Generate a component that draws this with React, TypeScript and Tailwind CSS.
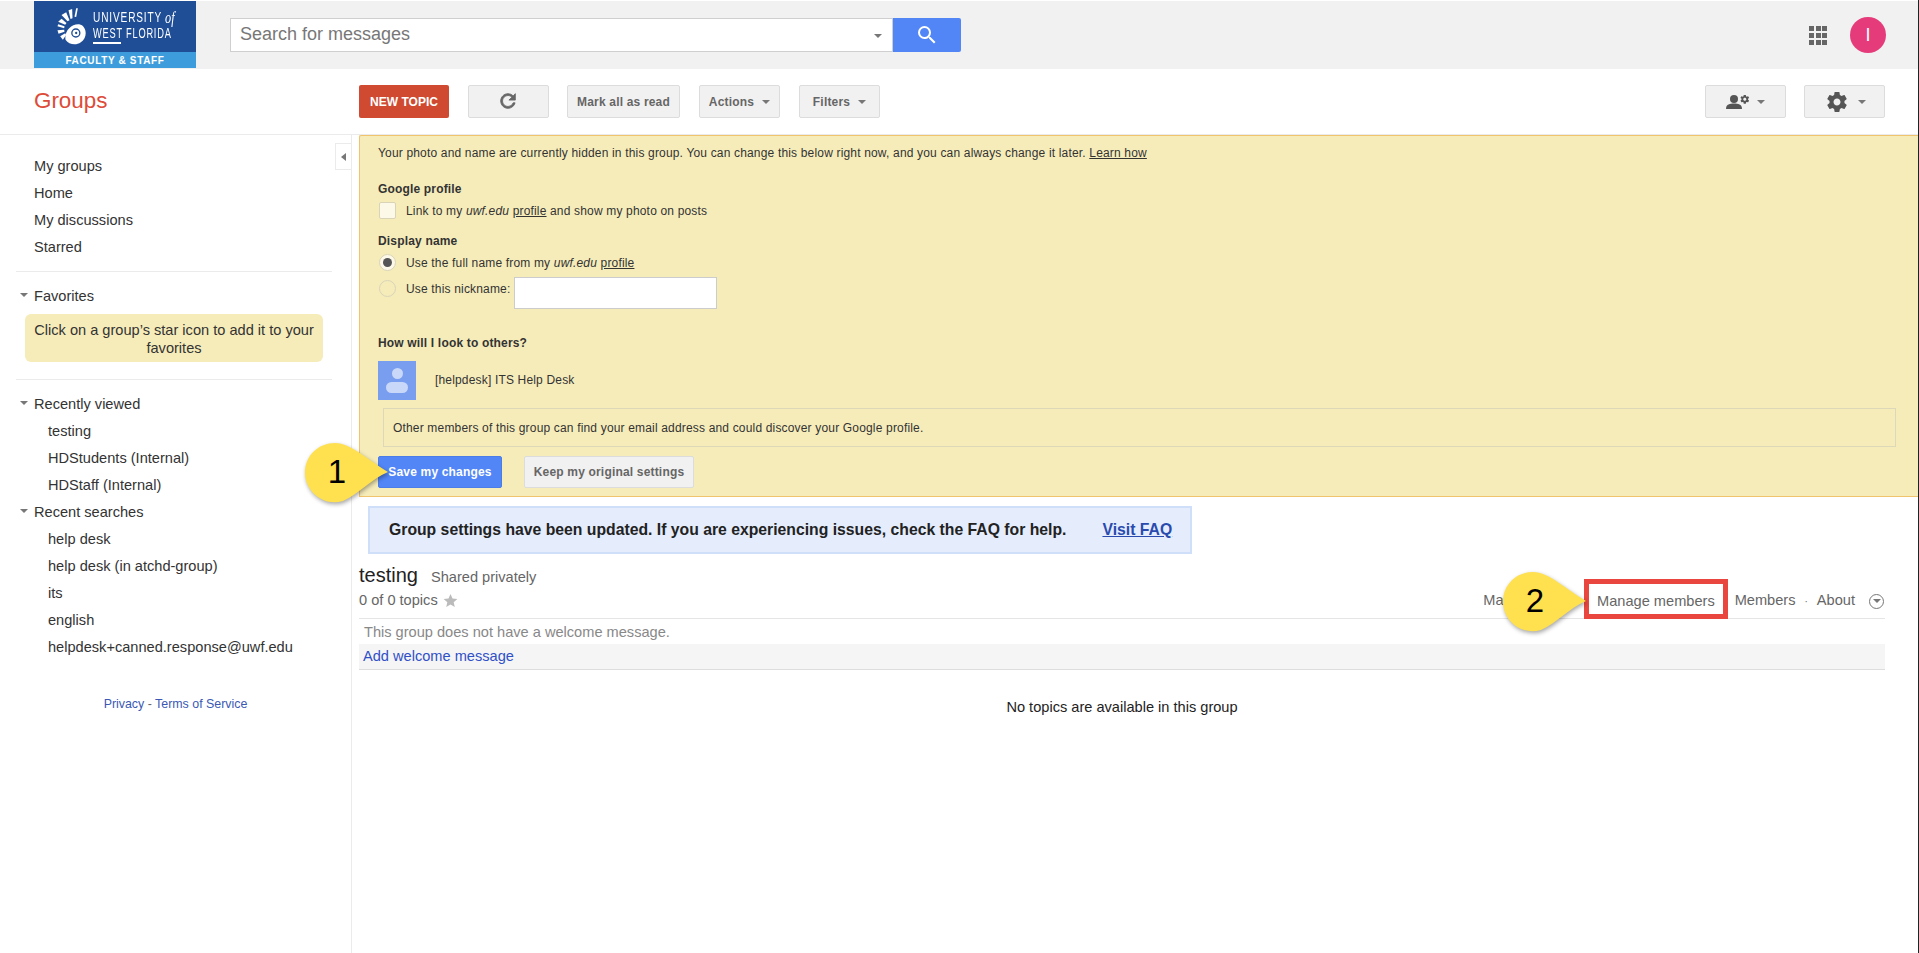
import React from 'react';

const GEAR =
  'M19.43 12.98c.04-.32.07-.64.07-.98s-.03-.66-.07-.98l2.11-1.65c.19-.15.24-.42.12-.64l-2-3.46c-.12-.22-.39-.3-.61-.22l-2.49 1c-.52-.4-1.08-.73-1.69-.98l-.38-2.65C14.46 2.18 14.25 2 14 2h-4c-.25 0-.46.18-.49.42l-.38 2.65c-.61.25-1.17.59-1.69.98l-2.49-1c-.23-.09-.49 0-.61.22l-2 3.46c-.13.22-.07.49.12.64l2.11 1.65c-.04.32-.07.65-.07.98s.03.66.07.98l-2.11 1.65c-.19.15-.24.42-.12.64l2 3.46c.12.22.39.3.61.22l2.49-1c.52.4 1.08.73 1.69.98l.38 2.65c.03.24.24.42.49.42h4c.25 0 .46-.18.49-.42l.38-2.65c.61-.25 1.17-.59 1.69-.98l2.49 1c.23.09.49 0 .61-.22l2-3.46c.12-.22.07-.49-.12-.64l-2.11-1.65zM12 15.5c-1.93 0-3.5-1.57-3.5-3.5s1.57-3.5 3.5-3.5 3.5 1.57 3.5 3.5-1.57 3.5-3.5 3.5z';

const Caret = () => (
  <span className="inline-block w-0 h-0 border-x-[4px] border-t-[4px] border-x-transparent border-t-[#777]" />
);

const Logo = () => (
  <div className="w-[162px] h-[67px] flex flex-col shrink-0 bg-[#1f4e96] font-['Liberation_Sans',sans-serif] text-white">
    <div className="flex-1 flex pl-[23px] pt-[6px]">
      <svg viewBox="80 20 90 120" width="31" height="40" className="shrink-0" fill="white">
        <polygon points="136,24 141,24 136,50 131,49" />
        <polygon points="113,30 124,26 125,54 119,56" />
        <polygon points="92,44 106,36 116,60 110,63" />
        <polygon points="82,64 92,55 107,68 103,73" />
        <polygon points="80,78 82,72 101,78 100,84" />
        <polygon points="83,100 80,90 100,88 101,94" />
        <polygon points="96,118 88,108 103,99 106,104" />
        <path d="M104 118 C100 92 122 70 145 72 C168 76 172 112 150 126 C134 137 114 132 104 118 Z" />
        <circle cx="135" cy="98" r="12" fill="none" stroke="#1f4e96" strokeWidth="4" />
        <circle cx="136" cy="98" r="3.5" fill="#1f4e96" />
      </svg>
      <div className="ml-[5px] pt-[2px] leading-none">
        <div className="h-[16px] flex items-center origin-left scale-x-[0.72] text-[14px] tracking-[1.2px] whitespace-nowrap">
          UNIVERSITY
          <span className="ml-[4px] font-['Liberation_Serif',serif] italic text-[17px] tracking-normal">of</span>
        </div>
        <div className="h-[16px] flex items-center origin-left scale-x-[0.66] text-[14px] tracking-[1.2px] whitespace-nowrap">
          WEST FLORIDA
        </div>
        <div className="mt-px w-[28px] h-[2px] bg-white" />
      </div>
    </div>
    <div className="h-[16px] bg-[#3d9cdb] flex items-center justify-center text-[10px] font-bold tracking-[0.65px]">
      FACULTY &amp; STAFF
    </div>
  </div>
);

const ToolButton = ({ className = '', children }: { className?: string; children: React.ReactNode }) => (
  <button className={`h-[33px] flex items-center justify-center rounded-[2px] border border-[#dcdcdc] bg-[#f1f1f1] text-[12px] font-bold text-[#666] tracking-[0.18px] ${className}`}>
    {children}
  </button>
);

const Row = ({ children, indent }: { children: React.ReactNode; indent?: boolean }) => (
  <div className={`h-[27px] flex items-center whitespace-nowrap ${indent ? 'pl-[48px]' : 'pl-[34px]'}`}>{children}</div>
);

const SectionRow = ({ children }: { children: React.ReactNode }) => (
  <div className="h-[27px] flex items-center whitespace-nowrap pl-[20px]">
    <span className="w-[14px] flex -mt-[3px]">
      <Caret />
    </span>
    {children}
  </div>
);

const Callout = ({ num, className }: { num: string; className: string }) => (
  <div className={`absolute w-[84px] h-[60px] ${className}`}>
    <svg viewBox="0 0 84 60" width="84" height="60" className="overflow-visible drop-shadow-[1px_2px_2px_rgba(0,0,0,0.35)]">
      <path d="M83 29 C66 36 54 51 38 58 C18 64 0 48 0 30 C0 12 14 0 30 0 C46 0 64 18 83 29 Z" fill="#ffe04f" />
    </svg>
    <span className="absolute left-[22px] top-[10px] w-[20px] text-center text-[33px] leading-[38px] text-black">{num}</span>
  </div>
);

export default function App() {
  return (
    <div className="relative w-full h-[953px] overflow-hidden flex flex-col bg-white pt-px border-r border-[#222] font-['Liberation_Sans',Arial,sans-serif] text-[14.6px] text-[#333]">
      {/* top bar */}
      <header className="h-[68px] shrink-0 bg-[#f1f1f1] flex pl-[34px] pr-[32px]">
        <Logo />
        <div className="ml-[34px] mt-[17px] h-[34px] flex">
          <div className="w-[663px] h-[34px] bg-white border border-[#cfcfcf] flex items-center pl-[9px] pr-[10px] pb-[2px] text-[18px] text-[#777]">
            <span className="flex-1">Search for messages</span>
            <span className="flex pt-[3px]">
              <Caret />
            </span>
          </div>
          <div className="w-[68px] h-[34px] bg-[#5286f7] rounded-r-[2px] flex items-center justify-center">
            <svg viewBox="0 0 24 24" width="24" height="24" fill="white">
              <path d="M15.5 14h-.79l-.28-.27A6.471 6.471 0 0 0 16 9.5 6.5 6.5 0 1 0 9.5 16c1.61 0 3.09-.59 4.23-1.57l.27.28v.79l5 4.99L20.49 19l-4.99-5zm-6 0C7.01 14 5 11.99 5 9.5S7.01 5 9.5 5 14 7.01 14 9.5 11.99 14 9.5 14z" />
            </svg>
          </div>
        </div>
        <div className="ml-auto flex items-center gap-[23px]">
          <div className="grid grid-cols-3 gap-[2px] w-[18px]">
            {Array.from({ length: 9 }).map((_, i) => (
              <span key={i} className="w-[5px] h-[5px] bg-[#666]" />
            ))}
          </div>
          <div className="w-[36px] h-[36px] rounded-full bg-[#e63b7a] flex items-center justify-center text-white text-[18px]">I</div>
        </div>
      </header>

      {/* toolbar */}
      <div className="h-[66px] shrink-0 flex items-start pt-[16px] border-b border-[#ebebeb] pr-[33px]">
        <div className="w-[359px] pl-[34px] h-[31px] flex items-center text-[22.4px] text-[#dd4b39]">Groups</div>
        <button className="w-[90px] h-[33px] rounded-[2px] bg-[#cf4a30] text-white text-[12px] font-bold">NEW TOPIC</button>
        <ToolButton className="w-[81px] ml-[19px] pr-[2px] pb-[2px]">
          <svg viewBox="0 0 24 24" width="22" height="22" fill="#666" stroke="#666" strokeWidth="0.9">
            <path d="M17.65 6.35A7.95 7.95 0 0 0 12 4c-4.42 0-7.99 3.58-7.99 8s3.57 8 7.99 8c3.73 0 6.84-2.55 7.73-6h-2.08A5.99 5.99 0 0 1 12 18c-3.31 0-6-2.69-6-6s2.69-6 6-6c1.66 0 3.14.69 4.22 1.78L13 11h7V4l-2.35 2.35z" />
          </svg>
        </ToolButton>
        <ToolButton className="w-[113px] ml-[18px]">Mark all as read</ToolButton>
        <ToolButton className="w-[81px] ml-[19px] gap-[8px]">Actions <Caret /></ToolButton>
        <ToolButton className="w-[81px] ml-[19px] gap-[8px]">Filters <Caret /></ToolButton>
        <ToolButton className="w-[81px] ml-auto gap-[7px]">
          <svg viewBox="0 0 24 16" width="24" height="16" fill="#555">
            <circle cx="8" cy="5" r="4" />
            <path d="M0 15 C0 10 4 9.5 8 9.5 C12 9.5 16 10 16 15 Z" />
            <g transform="translate(13.5 0) scale(0.44)">
              <path d={GEAR} />
            </g>
          </svg>
          <Caret />
        </ToolButton>
        <ToolButton className="w-[81px] ml-[18px] gap-[9px] pl-[2px]">
          <svg viewBox="0 0 24 24" width="24" height="24" fill="#555">
            <path d={GEAR} />
          </svg>
          <Caret />
        </ToolButton>
      </div>

      <div className="flex-1 flex min-h-0">
        {/* sidebar */}
        <aside className="relative w-[352px] shrink-0 border-r border-[#ebebeb] pt-[18px]">
          <div className="absolute right-0 top-[8px] w-[16px] h-[27px] border border-r-0 border-[#ebebeb] flex items-center justify-center">
            <span className="w-0 h-0 border-y-[4px] border-r-[5px] border-y-transparent border-r-[#777]" />
          </div>
          <Row>My groups</Row>
          <Row>Home</Row>
          <Row>My discussions</Row>
          <Row>Starred</Row>
          <div className="mt-[10px] ml-[16px] mr-[19px] h-px bg-[#ebebeb]" />
          <div className="mt-[11px]">
            <SectionRow>Favorites</SectionRow>
          </div>
          <div className="mt-[4px] ml-[25px] w-[298px] h-[48px] rounded-[6px] bg-[#f6ecb9] flex items-center justify-center text-center leading-[18px] px-[4px] pt-[2px]">
            Click on a group’s star icon to add it to your favorites
          </div>
          <div className="mt-[17px] ml-[16px] mr-[19px] h-px bg-[#ebebeb]" />
          <div className="mt-[11px]">
            <SectionRow>Recently viewed</SectionRow>
            <Row indent>testing</Row>
            <Row indent>HDStudents (Internal)</Row>
            <Row indent>HDStaff (Internal)</Row>
            <SectionRow>Recent searches</SectionRow>
            <Row indent>help desk</Row>
            <Row indent>help desk (in atchd-group)</Row>
            <Row indent>its</Row>
            <Row indent>english</Row>
            <Row indent>helpdesk+canned.response@uwf.edu</Row>
          </div>
          <div className="mt-[35px] text-center text-[12.4px] leading-[16px] text-[#3a58b4]">
            Privacy <span className="text-[#666]">-</span> Terms of Service
          </div>
        </aside>

        {/* content */}
        <main className="flex-1 min-w-0">
          <section className="ml-[7px] h-[362px] border border-r-0 border-[#f0c36d] rounded-tl-[2px] bg-[#f6ecba] pl-[18px] pt-[9px] text-[12px] leading-[16px] tracking-[0.17px] text-[#333]">
            <p>
              Your photo and name are currently hidden in this group. You can change this below right now, and you can always change it later. <u>Learn how</u>
            </p>
            <h4 className="mt-[20px] font-bold">Google profile</h4>
            <div className="mt-[5px] h-[17px] flex items-center">
              <span className="w-[17px] h-[17px] ml-px rounded-[2px] border border-[#d9d4b8] bg-[#fcf9e8]" />
              <span className="ml-[10px]">
                Link to my <i>uwf.edu</i> <u>profile</u> and show my photo on posts
              </span>
            </div>
            <h4 className="mt-[14px] font-bold">Display name</h4>
            <div className="mt-[5px] h-[17px] flex items-center">
              <span className="w-[17px] h-[17px] ml-px rounded-full border border-[#d9d4b8] bg-[#fcf9e8] flex items-center justify-center">
                <span className="w-[9px] h-[9px] rounded-full bg-[#555]" />
              </span>
              <span className="ml-[10px]">
                Use the full name from my <i>uwf.edu</i> <u>profile</u>
              </span>
            </div>
            <div className="mt-[6px] h-[32px] flex items-start">
              <span className="mt-[3px] w-[17px] h-[17px] ml-px rounded-full border border-[#d9d4b8] bg-[#f6ecba]" />
              <span className="ml-[10px] mt-[4px]">Use this nickname:</span>
              <span className="ml-[4px] w-[203px] h-[32px] bg-white border border-[#ccc]" />
            </div>
            <h4 className="mt-[26px] font-bold">How will I look to others?</h4>
            <div className="mt-[10px] h-[39px] flex items-center">
              <div className="w-[38px] h-[39px] bg-[#7a9eef] flex flex-col items-center justify-center">
                <span className="w-[11px] h-[11px] rounded-full bg-[#c9d8f8]" />
                <span className="mt-[3px] w-[22px] h-[11px] rounded-full bg-[#c9d8f8]" />
              </div>
              <span className="ml-[19px] -mt-[2px]">[helpdesk] ITS Help Desk</span>
            </div>
            <div className="mt-[8px] ml-[5px] mr-[22px] h-[39px] border border-[#ddd8b8] flex items-center pl-[9px]">
              Other members of this group can find your email address and could discover your Google profile.
            </div>
            <div className="mt-[9px] flex gap-[22px]">
              <button className="w-[124px] h-[32px] rounded-[2px] border border-[#4a7de8] bg-[#5286f7] text-white text-[12px] font-bold tracking-[0.18px]">
                Save my changes
              </button>
              <button className="w-[170px] h-[32px] rounded-[2px] border border-[#dcdcdc] bg-[#f1f1f1] text-[#666] text-[12px] font-bold tracking-[0.18px]">
                Keep my original settings
              </button>
            </div>
          </section>

          <div className="ml-[16px] mt-[9px] w-[824px] h-[48px] bg-[#e5edfd] border-2 border-[#cfdffa] flex items-center pl-[19px] text-[15.75px] font-bold text-[#222]">
            Group settings have been updated. If you are experiencing issues, check the FAQ for help.
            <u className="ml-[36px] text-[#2a4bad]">Visit FAQ</u>
          </div>

          <div className="ml-[7px] mr-[33px]">
            <div className="mt-[9px] flex items-end justify-between border-b border-[#e5e5e5] pb-[6px]">
              <div>
                <div className="h-[24px] flex items-baseline leading-[24px]">
                  <span className="text-[20px] text-[#222]">testing</span>
                  <span className="ml-[13px] text-[#666]">Shared privately</span>
                </div>
                <div className="mt-[4px] mb-px h-[20px] flex items-center text-[#666]">
                  0 of 0 topics
                  <svg viewBox="0 0 24 24" width="15" height="15" fill="#bbb" className="ml-[5px] -mt-[2px]">
                    <path d="M12 1.5l3.2 7.2 7.8.8-5.9 5.2 1.7 7.7L12 18.4l-6.8 4 1.7-7.7L1 9.5l7.8-.8z" />
                  </svg>
                </div>
              </div>
              <div className="h-[20px] mb-px flex items-center text-[#666] whitespace-nowrap">
                <span>Manage</span>
                <span className="relative inline-block leading-[20px] ml-[61px]">
                  Manage members
                  <span className="absolute -left-[13px] -right-[13px] -top-[12px] -bottom-[8px] border-[5px] border-[#e8463f]" />
                </span>
                <span className="ml-[20px]">Members</span>
                <span className="mx-[9px] text-[10px]">·</span>
                <span>About</span>
                <span className="ml-[14px] mr-px w-[15px] h-[15px] rounded-full border border-[#777] flex items-center justify-center">
                  <Caret />
                </span>
              </div>
            </div>
            <div className="h-[25px] pl-[5px] pt-[2px] flex items-center text-[#888]">This group does not have a welcome message.</div>
            <div className="h-[26px] pl-[4px] pt-[1px] flex items-center bg-[#f5f5f5] border-b border-[#ddd] text-[#3050c8]">Add welcome message</div>
            <div className="mt-[28px] text-center leading-[18px] text-[#222]">No topics are available in this group</div>
          </div>
        </main>
      </div>

      <Callout num="1" className="left-[305px] top-[443px]" />
      <Callout num="2" className="left-[1503px] top-[572px]" />
    </div>
  );
}
